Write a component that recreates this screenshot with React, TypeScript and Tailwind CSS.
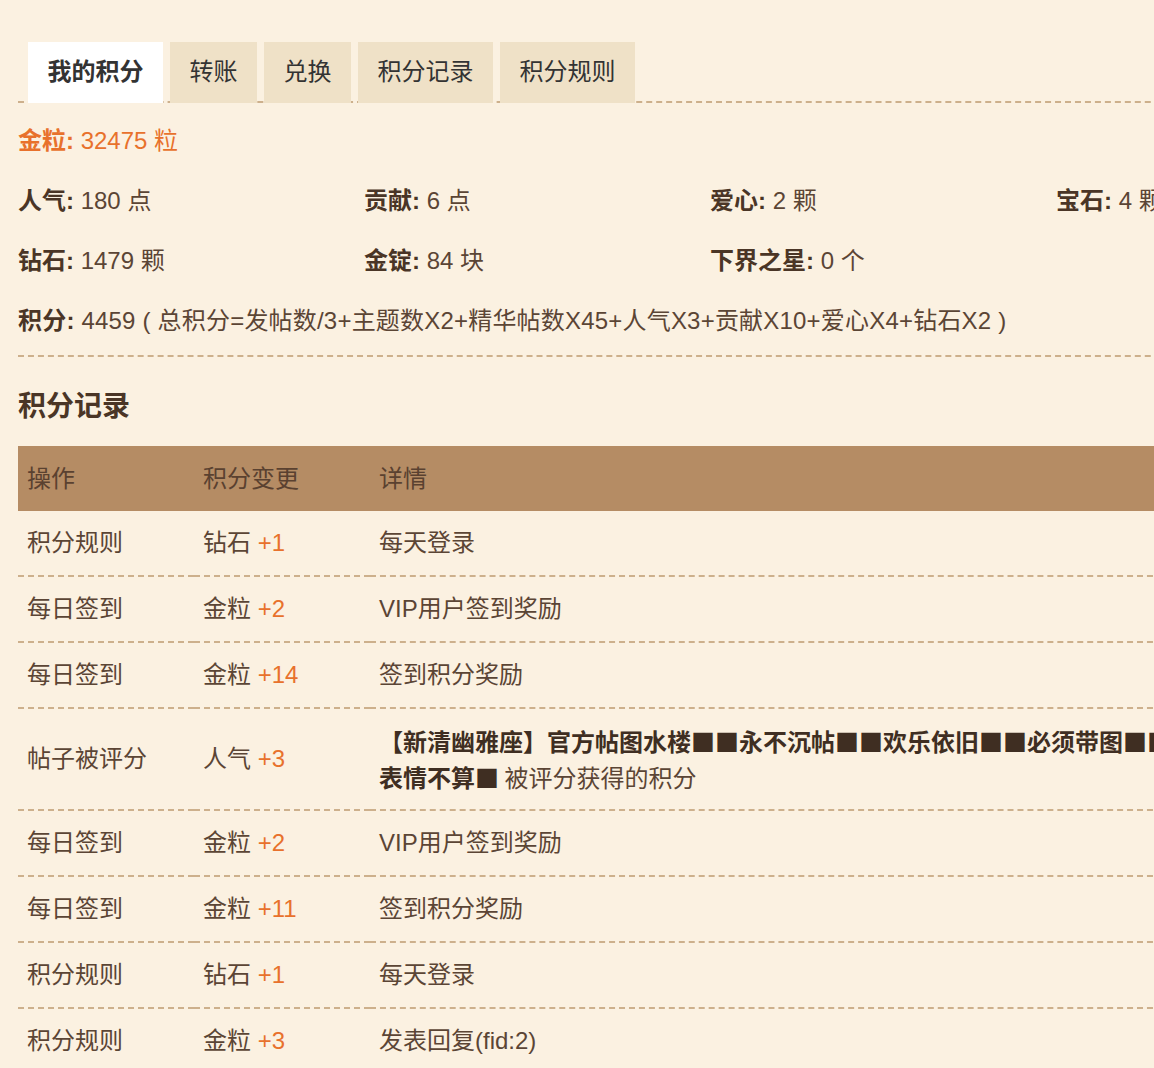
const font = { fontFamily: '"Liberation Sans", "Noto Sans CJK SC", sans-serif' };
const cjk = { fontFamily: '"Noto Sans CJK SC", sans-serif' };

const tabs = ["我的积分", "转账", "兑换", "积分记录", "积分规则"];

const stats: [string, string][][] = [
  [["人气", "180 点"], ["贡献", "6 点"], ["爱心", "2 颗"], ["宝石", "4 颗"]],
  [["钻石", "1479 颗"], ["金锭", "84 块"], ["下界之星", "0 个"]],
];

type Row = { op: string; kind: string; delta: string; detail: React.ReactNode };

const rows: Row[] = [
  { op: "积分规则", kind: "钻石", delta: "+1", detail: "每天登录" },
  { op: "每日签到", kind: "金粒", delta: "+2", detail: "VIP用户签到奖励" },
  { op: "每日签到", kind: "金粒", delta: "+14", detail: "签到积分奖励" },
  {
    op: "帖子被评分",
    kind: "人气",
    delta: "+3",
    detail: (
      <div style={cjk} className="leading-[36px]">
        <span className="font-bold text-[#3f2e22]">
          【新清幽雅座】官方帖图水楼■■永不沉帖■■欢乐依旧■■必须带图■■纯
          <br />
          表情不算■
        </span>{" "}
        被评分获得的积分
      </div>
    ),
  },
  { op: "每日签到", kind: "金粒", delta: "+2", detail: "VIP用户签到奖励" },
  { op: "每日签到", kind: "金粒", delta: "+11", detail: "签到积分奖励" },
  { op: "积分规则", kind: "钻石", delta: "+1", detail: "每天登录" },
  { op: "积分规则", kind: "金粒", delta: "+3", detail: "发表回复(fid:2)" },
];

const cell = "px-[9px] py-[14px] leading-[36px] border-b-2 border-dashed border-[#cdb08c]";

export default function App() {
  return (
    <div className="w-full min-h-screen overflow-hidden bg-[#fbf1e1] text-[24px] text-[#5b4535]" style={font}>
      <div className="w-[1420px] pl-[18px] pt-[42px]">
        {/* tabs */}
        <ul className="flex gap-[7px] pl-[10px] border-b-2 border-dashed border-[#cdb08c]">
          {tabs.map((t, i) => (
            <li
              key={t}
              className={
                i === 0
                  ? "h-[61px] pb-[2px] px-[19.5px] flex items-center bg-white font-bold text-[#333] -mb-[2px]"
                  : "h-[61px] pb-[2px] px-[19.5px] flex items-center bg-[#efe1c7] text-[#333] -mb-[2px]"
              }
            >
              {t}
            </li>
          ))}
        </ul>

        {/* stats */}
        <div className="pt-[8px] pb-[4px] border-b-2 border-dashed border-[#cdb08c]">
          <div className="h-[60px] flex items-center text-[#e8712c]">
            <b>金粒:</b>&nbsp;32475 粒
          </div>
          {stats.map((line, i) => (
            <div key={i} className="h-[60px] flex items-center">
              {line.map(([k, v]) => (
                <div key={k} className="w-[346px] shrink-0">
                  <b className="text-[#4a3526]">{k}:</b> {v}
                </div>
              ))}
            </div>
          ))}
          <div className="h-[60px] flex items-center tracking-[0.2px]">
            <b className="text-[#4a3526]">积分:</b>&nbsp;4459 ( 总积分=发帖数/3+主题数X2+精华帖数X45+人气X3+贡献X10+爱心X4+钻石X2 )
          </div>
        </div>

        <h2 className="h-[89px] pt-[10px] flex items-center text-[28px] font-bold text-[#4a3526]">积分记录</h2>

        {/* table */}
        <table className="w-[1384px] border-collapse">
          <thead>
            <tr className="bg-[#b58c64] text-[#5a4130] text-left">
              <th className="w-[176px] h-[65px] px-[9px] font-normal">操作</th>
              <th className="w-[176px] px-[9px] font-normal">积分变更</th>
              <th className="px-[9px] font-normal">详情</th>
            </tr>
          </thead>
          <tbody>
            {rows.map((r, i) => (
              <tr key={i}>
                <td className={cell}>{r.op}</td>
                <td className={cell}>
                  {r.kind} <span className="text-[#e8712c]">{r.delta}</span>
                </td>
                <td className={cell}>{r.detail}</td>
              </tr>
            ))}
          </tbody>
        </table>
      </div>
    </div>
  );
}
